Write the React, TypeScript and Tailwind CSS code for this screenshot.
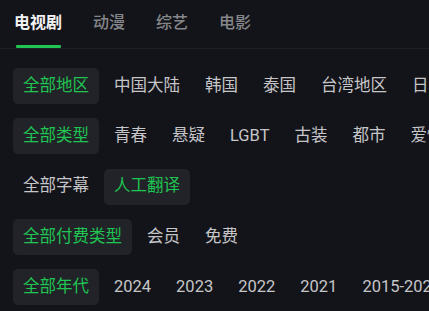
import React from 'react'

const TABS = ['电视剧', '动漫', '综艺', '电影']

const ROWS: string[][] = [
  ['全部地区', '中国大陆', '韩国', '泰国', '台湾地区', '日本', '美国'],
  ['全部类型', '青春', '悬疑', 'LGBT', '古装', '都市', '爱情', '喜剧'],
  ['全部字幕', '人工翻译'],
  ['全部付费类型', '会员', '免费'],
  ['全部年代', '2024', '2023', '2022', '2021', '2015-2020', '更早'],
]

const SELECTED = [0, 0, 1, 0, 0]

export default function App() {
  return (
    <div className="w-full h-[311px] overflow-hidden bg-[#131419] font-['Roboto','Noto_Sans_CJK_SC',sans-serif]">
      <div className="flex gap-[31px] px-[14px] pt-[11px] border-b border-[#1f2025]">
        {TABS.map((t, i) => (
          <div key={t} className={`flex flex-col items-center ${t.length === 3 ? 'w-[48px]' : 'w-[32px]'}`}>
            <span className={`text-[16px] leading-6 whitespace-nowrap ${i === 0 ? 'font-bold text-[#f2f2f3]' : 'font-medium text-[#86878b]'}`}>{t}</span>
            <div className={`mt-[10px] h-[3px] w-[45px] shrink-0 rounded-[1px] ${i === 0 ? 'bg-[#1fc452]' : 'hidden'}`} />
          </div>
        ))}
      </div>

      <div className="flex flex-col gap-[14.3px] pt-[19px] pl-[13px]">
        {ROWS.map((row, r) => (
          <div key={r} className="flex gap-[5px] whitespace-nowrap">
            {row.map((item, i) => {
              const active = SELECTED[r] === i
              return (
                <div
                  key={item}
                  className={`h-9 shrink-0 px-[10px] rounded-[5px] flex items-center text-[16.5px] ${
                    active ? 'bg-[#222328] text-[#1fc452]' : 'text-[#c6c6c9]'
                  }`}
                >
                  {item}
                </div>
              )
            })}
          </div>
        ))}
      </div>
    </div>
  )
}
